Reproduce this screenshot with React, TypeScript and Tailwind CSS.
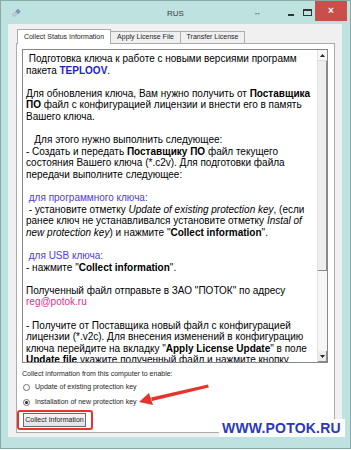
import React from "react";

const body: React.ReactNode[] = [
  " Подготовка ключа к работе с новыми версиями программ",
  <>пакета <b className="text-[#1d1dcc]">TEPLOOV</b>.</>,
  "",
  <>Для обновления ключа, Вам нужно получить от <b>Поставщика</b></>,
  <><b>ПО</b> файл с конфигурацией лицензии и внести его в память</>,
  "Вашего ключа.",
  "",
  "   Для этого нужно выполнить следующее:",
  <>- Создать и передать <b>Поставщику ПО</b> файл текущего</>,
  "состояния Вашего ключа (*.c2v). Для подготовки файла",
  "передачи выполните следующее:",
  "",
  <span className="text-[#4c3ce0]"> для программного ключа:</span>,
  <> - установите отметку <i>Update of existing protection key</i>, (если</>,
  <>ранее ключ не устанавливался установите отметку <i>Instal of</i></>,
  <><i>new protection key</i>) и нажмите "<b>Collect information</b>".</>,
  "",
  <span className="text-[#4c3ce0]"> для USB ключа:</span>,
  <>- нажмите "<b>Collect information</b>".</>,
  "",
  'Полученный файл отправьте в ЗАО "ПОТОК" по адресу',
  <span className="text-[#d4348a]">reg@potok.ru</span>,
  "",
  "- Получите от Поставщика новый файл с конфигурацией",
  "лицензии (*.v2c). Для внесения изменений в конфигурацию",
  <>ключа перейдите на вкладку "<b>Apply License Update</b>" в поле</>,
  <><b>Update file</b> укажите полученный файл и нажмите кнопку</>,
];

function Radio({ checked, label }: { checked?: boolean; label: string }) {
  return (
    <div className="flex items-center gap-[5px] h-[9px]">
      <div className="w-[7px] h-[7px] rounded-full border border-[#6f6f6f] bg-white flex items-center justify-center">
        {checked && <div className="w-[3px] h-[3px] rounded-full bg-[#222]" />}
      </div>
      <span>{label}</span>
    </div>
  );
}

export default function App() {
  return (
    <div className="relative w-[351px] h-[450px] bg-white overflow-hidden" style={{ fontFamily: '"Liberation Sans", Arial, sans-serif' }}>
      <div className="w-[351px] h-[449px] border border-[#86aaa9] bg-[#bde2e0] flex flex-col">
        {/* title bar */}
        <div className="h-[23px] flex items-center relative">
          <svg className="absolute left-[11px] top-[8px]" width="9" height="9" viewBox="0 0 9 9">
            <rect x="4" y="0.5" width="4" height="4" rx="0.5" transform="rotate(45 6 2.5)" fill="#7f95b8" />
            <rect x="1" y="4" width="3" height="3" transform="rotate(45 2.5 5.5)" fill="#c9d3e3" stroke="#8896ad" strokeWidth="0.6" />
          </svg>
          <div className="flex-1 text-center text-[8px] text-[#3b3b3b] pt-[2px]">RUS</div>
          <div className="absolute left-[253px] top-[8px] text-[7px] leading-none text-[#333] font-bold">↔</div>
          <div className="absolute left-[287px] top-[13px] w-[6px] h-[2px] bg-[#333]" />
          <div className="absolute left-[302px] top-[8px] w-[9px] h-[7px] border border-[#333] border-t-2" />
          <div className="absolute left-[314px] top-0 w-[32px] h-[20px] bg-[#c9504a] flex items-center justify-center text-white text-[10px] font-bold leading-none">×</div>
        </div>

        {/* client area */}
        <div className="ml-[7px] mr-[8px] h-[413px] bg-[#f0f0f0] pt-[5px] pl-[8px] pr-[7px] text-[7px] text-[#1e1e1e]">
          {/* tabs */}
          <div className="flex items-end h-[14px] pl-[1px] relative z-10">
            <div className="w-[94px] h-[15px] -mb-px bg-white border border-b-0 border-[#acacac] flex items-center justify-center">
              Collect Status Information
            </div>
            <div className="w-[70px] h-[12px] bg-[#f0f0f0] border border-l-0 border-b-0 border-[#acacac] flex items-center justify-center">
              Apply License File
            </div>
            <div className="w-[64px] h-[12px] bg-[#f0f0f0] border border-l-0 border-b-0 border-[#acacac] flex items-center justify-center">
              Transfer License
            </div>
          </div>

          {/* tab page */}
          <div className="w-[319px] h-[390px] border border-[#acacac] bg-white pt-[5px] pl-[5px]">
            <div className="w-[306px] h-[314px] border border-[#828790] bg-white flex">
              <div className="flex-1 overflow-hidden pt-[3px] pl-[3px] text-[10px] text-black">
                {body.map((line, i) => (
                  <div key={i} className="h-[11.6px] leading-[11.6px] whitespace-pre">
                    {line === "" ? "\u00a0" : line}
                  </div>
                ))}
              </div>
              <div className="w-[10px] border-l border-[#e2e2e2] bg-[#f7f7f7] flex flex-col">
                <div className="h-[11px] flex items-center justify-center border-b border-[#dcdcdc]">
                  <svg width="5" height="3" viewBox="0 0 5 3"><path d="M0 3 L2.5 0 L5 3 Z" fill="#222" /></svg>
                </div>
                <div className="h-[210px] bg-[#eeeeee] border-r border-b border-[#8a8a8a]" />
                <div className="flex-1" />
                <div className="h-[11px] flex items-center justify-center bg-[#ececec] border-r border-b border-[#8a8a8a]">
                  <svg width="5" height="3" viewBox="0 0 5 3"><path d="M0 0 L2.5 3 L5 0 Z" fill="#222" /></svg>
                </div>
              </div>
            </div>

            <div className="mt-[6px] h-[9px] leading-[9px]">Collect information from this computer to enable:</div>
            <div className="mt-[5px] flex flex-col gap-[6px] pl-[1px]">
              <Radio label="Update of existing protection key" />
              <Radio checked label="Installation of new protection key" />
            </div>
            <div className="mt-[6px] ml-[1px] w-[63px] h-[14px] border border-[#6a6a6a] bg-gradient-to-b from-[#f4f4f4] to-[#e3e3e3] flex items-center justify-center">
              Collect Information
            </div>
          </div>
        </div>
      </div>

      {/* annotation overlays */}
      <div className="absolute left-[17px] top-[410px] w-[76px] h-[20px] border-2 border-[#e4352c] rounded-[3px]" />
      <svg className="absolute left-0 top-0" width="351" height="450" viewBox="0 0 351 450">
        <path d="M208 384.5 L151 397.5 L152 401 L208.8 387.5 Z" fill="#e4352c" />
        <path d="M139 402 L149 393 L153 405 Z" fill="#e4352c" />
      </svg>
      <div className="absolute left-[219px] top-[419px] bg-white pl-[3px] pr-[4px] h-[18px] flex items-center text-[14px] font-bold text-[#2a37c0] tracking-[0.2px]">
        WWW.POTOK.RU
      </div>
    </div>
  );
}
